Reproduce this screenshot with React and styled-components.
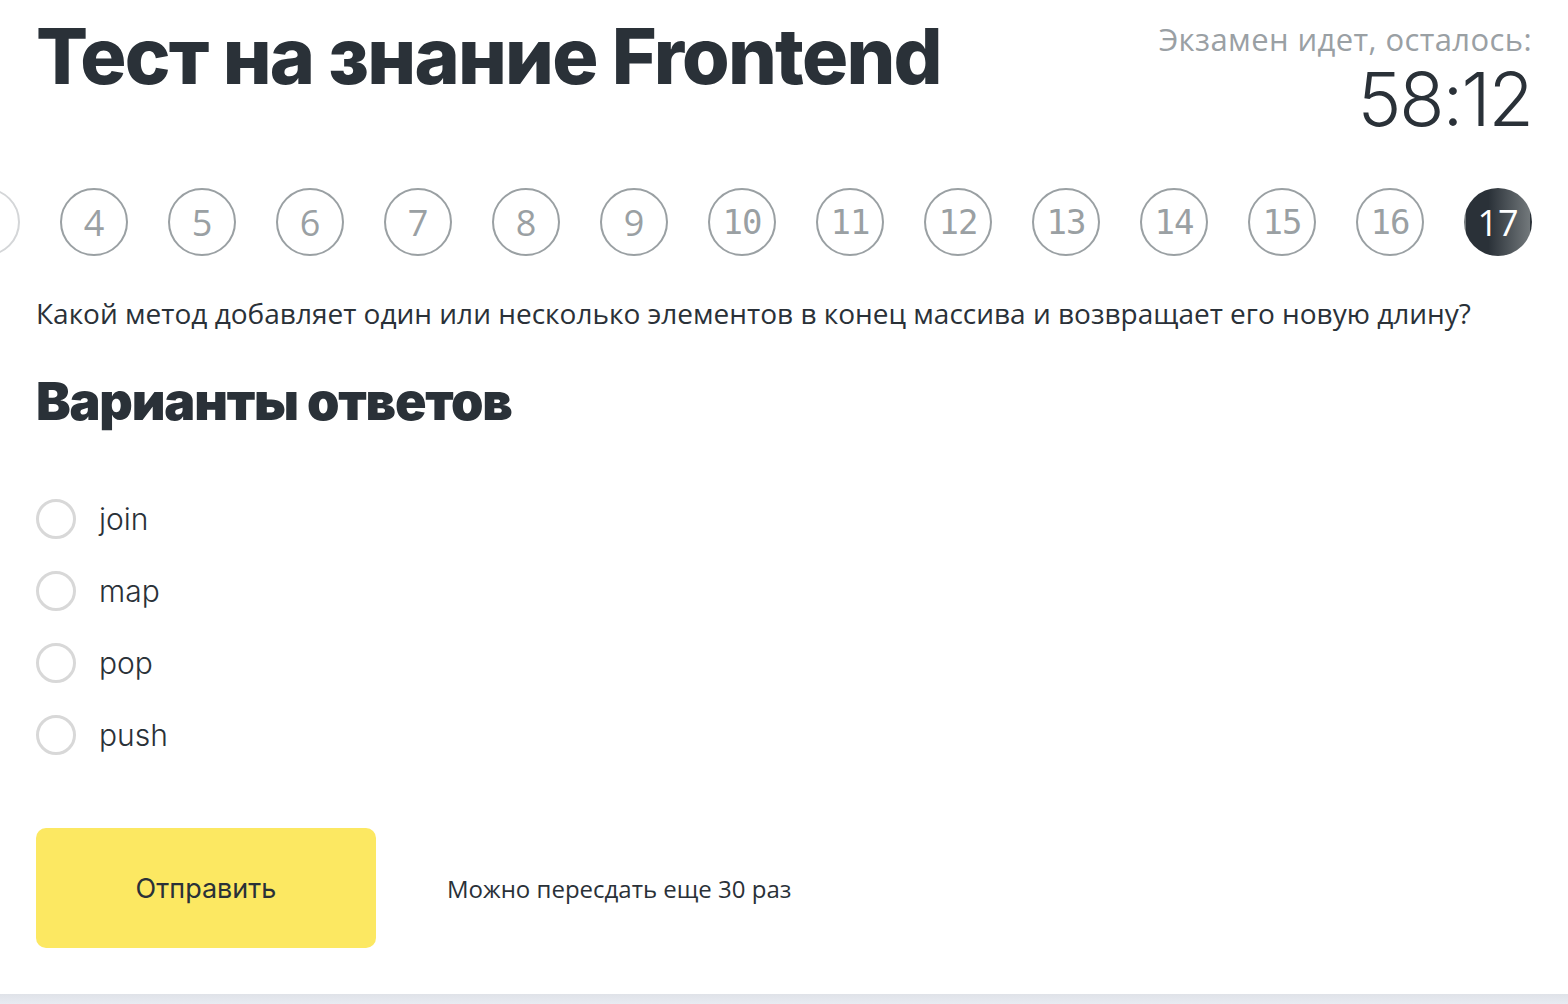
import styled, { createGlobalStyle } from "styled-components"

const GlobalStyle = createGlobalStyle`
    body {
        margin: 0;
        background: #ffffff;
        font-family: 'Open Sans', sans-serif;
        color: #2a3138;
    }
`

const answers = ["join", "map", "pop", "push"]
const questions = Array.from({ length: 15 }, (_, i) => i + 3)

export default function App() {
    return (
        <>
            <GlobalStyle />
            <Page>
                <Header>
                    <Title>Тест на знание Frontend</Title>
                    <Timer>
                        <TimerLabel>Экзамен идет, осталось:</TimerLabel>
                        <TimerValue>58:12</TimerValue>
                    </Timer>
                </Header>

                <Steps>
                    {questions.map((n) => (
                        <Step key={n} active={n === 17} faded={n < 4} mono={n >= 10 && n < 17}>
                            {n < 4 ? "" : n}
                        </Step>
                    ))}
                </Steps>

                <Question>Какой метод добавляет один или несколько элементов в конец массива и возвращает его новую длину?</Question>

                <Subtitle>Варианты ответов</Subtitle>

                <Answers>
                    {answers.map((a) => (
                        <Answer key={a}>
                            <Radio />
                            <AnswerText>{a}</AnswerText>
                        </Answer>
                    ))}
                </Answers>

                <Footer>
                    <SubmitButton>Отправить</SubmitButton>
                    <Retakes>Можно пересдать еще 30 раз</Retakes>
                </Footer>
            </Page>
            <BottomBar />
        </>
    )
}

const Page = styled.div`
    padding: 0 36px;
    height: 994px;
    box-sizing: border-box;
    overflow: hidden;
`

const Header = styled.div`
    display: flex;
    justify-content: space-between;
    align-items: flex-start;
    padding-top: 14px;
`

const Title = styled.h1`
    margin: 0;
    font-family: 'Inter', sans-serif;
    font-weight: 800;
    font-size: 77px;
    line-height: 84px;
    letter-spacing: -1.8px;
    color: #2a3138;
`

const Timer = styled.div`
    display: flex;
    flex-direction: column;
    align-items: flex-end;
`

const TimerLabel = styled.span`
    font-family: 'Open Sans', sans-serif;
    font-size: 31px;
    line-height: 50px;
    letter-spacing: 0.4px;
    color: #9aa0a4;
`

const TimerValue = styled.span`
    font-family: 'Inter', sans-serif;
    font-weight: 300;
    font-size: 74px;
    line-height: 70px;
    letter-spacing: -2px;
    color: #2a3138;
`

const Steps = styled.div`
    display: flex;
    justify-content: flex-end;
    gap: 40px;
    margin: 54px 0 0 -36px;
    overflow: hidden;
`

const Step = styled.div`
    flex: 0 0 68px;
    height: 68px;
    border-radius: 50%;
    box-sizing: border-box;
    border: 2px solid ${(p) => (p.active ? "transparent" : p.faded ? "#d4d6d8" : "#9aa0a3")};
    background: ${(p) => (p.active ? "linear-gradient(90deg, #2a3138 35%, #72787b 100%)" : "#ffffff")};
    color: ${(p) => (p.active ? "#ffffff" : p.faded ? "#d4d6d8" : "#9aa0a3")};
    font-family: ${(p) => (p.mono ? "'DejaVu Sans Mono', monospace" : "'Open Sans', sans-serif")};
    font-size: ${(p) => (p.mono ? "34px" : "36px")};
    display: flex;
    align-items: center;
    justify-content: center;
    letter-spacing: ${(p) => (p.mono ? "-1px" : "0")};
`

const Question = styled.p`
    margin: 38px 0 0;
    font-size: 28px;
    line-height: 38px;
    color: #2a3138;
`

const Subtitle = styled.h2`
    margin: 38px 0 0;
    font-family: 'Inter', sans-serif;
    font-weight: 900;
    font-size: 52px;
    line-height: 64px;
    letter-spacing: -1.2px;
    color: #2a3138;
`

const Answers = styled.div`
    display: flex;
    flex-direction: column;
    gap: 32px;
    margin-top: 65px;
`

const Answer = styled.label`
    display: flex;
    align-items: center;
    gap: 23px;
    height: 40px;
`

const Radio = styled.span`
    width: 40px;
    height: 40px;
    border-radius: 50%;
    border: 3px solid #d8d8d8;
    box-sizing: border-box;
`

const AnswerText = styled.span`
    font-family: 'Inter', sans-serif;
    font-weight: 300;
    font-size: 30px;
    color: #2a3138;
`

const Footer = styled.div`
    display: flex;
    align-items: center;
    gap: 71px;
    margin-top: 73px;
`

const SubmitButton = styled.button`
    width: 340px;
    height: 120px;
    border: 0;
    border-radius: 10px;
    background-color: #fce862;
    font-family: 'Inter', sans-serif;
    font-weight: 400;
    font-size: 27px;
    color: #2a3138;
`

const Retakes = styled.span`
    font-size: 24px;
    color: #2a3138;
`

const BottomBar = styled.div`
    height: 10px;
    background: linear-gradient(180deg, #dfe2e8, #e8ebf2);
`
